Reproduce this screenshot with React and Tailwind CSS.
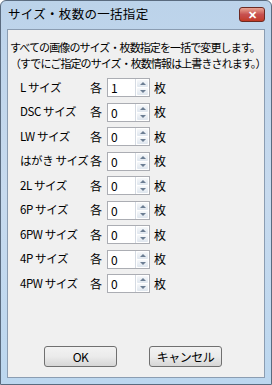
const rows = [
  { label: "L サイズ", value: "1" },
  { label: "DSC サイズ", value: "0" },
  { label: "LW サイズ", value: "0" },
  { label: "はがき サイズ", value: "0" },
  { label: "2L サイズ", value: "0" },
  { label: "6P サイズ", value: "0" },
  { label: "6PW サイズ", value: "0" },
  { label: "4P サイズ", value: "0" },
  { label: "4PW サイズ", value: "0" },
];

function Spinner({ value }) {
  return (
    <div className="flex h-[19px] w-[43px] border border-[#abadb3] bg-white">
      <div className="flex-1 pl-[3px] text-[12px] leading-[17px]">{value}</div>
      <div className="flex w-[14px] flex-col border-l border-[#d5dbe3] p-px">
        <div className="flex flex-1 items-center justify-center rounded-[1px] bg-gradient-to-b from-[#f6f8fa] to-[#dfe6ee]">
          <div className="h-0 w-0 border-x-[3px] border-b-[3px] border-x-transparent border-b-[#6c7e93]" />
        </div>
        <div className="mt-px flex flex-1 items-center justify-center rounded-[1px] bg-gradient-to-b from-[#f6f8fa] to-[#dfe6ee]">
          <div className="h-0 w-0 border-x-[3px] border-t-[3px] border-x-transparent border-t-[#6c7e93]" />
        </div>
      </div>
    </div>
  );
}

function Button({ children }) {
  return (
    <div className="flex h-[21px] w-[73px] items-center justify-center rounded-[3px] border border-[#707070] bg-gradient-to-b from-[#f2f2f2] via-[#ebebeb] to-[#d6d6d6] text-[12px] tracking-[-0.5px]">
      {children}
    </div>
  );
}

export default function App() {
  return (
    <div
      className="flex h-[385px] w-[272px] flex-col rounded-t-[6px] border border-[#5a6b7f] bg-gradient-to-b from-[#bcd3ea] via-[#c7daee] to-[#bcd7ef] text-black"
      style={{ fontFamily: '"Noto Sans CJK JP", "Noto Sans", sans-serif' }}
    >
      {/* title bar */}
      <div className="flex h-[27px] items-center justify-between pl-[7px] pr-[6px]">
        <span className="text-[12.5px] tracking-[0.3px]">サイズ・枚数の一括指定</span>
        <div className="flex h-[15px] w-[26px] items-center justify-center rounded-[3px] border border-[#6d2a22] bg-gradient-to-b from-[#e8a493] via-[#c75050] to-[#c23a24] text-[11px] font-bold leading-none text-white">
          ✕
        </div>
      </div>

      {/* client */}
      <div className="mx-[6px] mb-[6px] mt-[1px] flex flex-1 flex-col border border-[#8b9db2] bg-[#f0f0f0]">
        <div className="pl-[2px] pt-[9px] text-[11px] leading-[16px] tracking-[-0.9px]">
          <p>すべての画像のサイズ・枚数指定を一括で変更します。</p>
          <p>（すでにご指定のサイズ・枚数情報は上書きされます。）</p>
        </div>

        <div className="mt-[7px] flex flex-col gap-[5.5px] pl-[12px]">
          {rows.map((r) => (
            <div key={r.label} className="flex items-center whitespace-nowrap text-[12px] tracking-[-0.5px]">
              <span className="w-[70px] text-[11.5px] tracking-[-0.4px]">{r.label}</span>
              <span className="w-[17px]">各</span>
              <Spinner value={r.value} />
              <span className="ml-[4px]">枚</span>
            </div>
          ))}
        </div>

        <div className="mt-auto mb-[10px] flex justify-center gap-[32px] pr-[6px]">
          <Button>OK</Button>
          <Button>キャンセル</Button>
        </div>
      </div>
    </div>
  );
}
